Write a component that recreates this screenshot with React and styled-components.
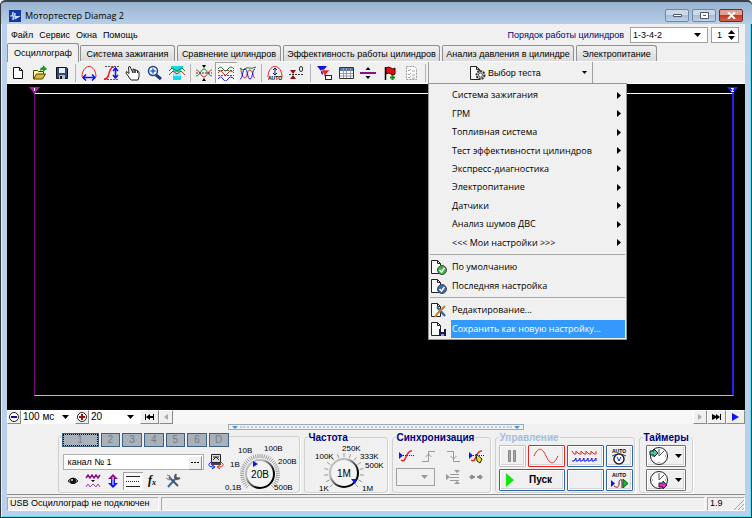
import React from 'react';
import styled, {createGlobalStyle, css} from 'styled-components';

const GlobalStyle = createGlobalStyle`
  * {
    box-sizing: border-box;
  }
  body {
    margin: 0;
    font-family: "Liberation Sans", Arial, sans-serif;
    font-size: 9px;
    line-height: 12px;
    color: #000;
  }
  button, input, select {
    margin: 0;
    padding: 0;
    border: 0;
    border-radius: 0;
    background: none;
    color: inherit;
    font: inherit;
    appearance: none;
    outline: none;
  }
  svg {
    display: block;
    flex: none;
  }
`;

const Window = styled.div`
  display: flex;
  flex-flow: column nowrap;
  min-height: 100vh;
  padding: 0 7px 6px 6px;
  background: #b9d1ea;
  border-left: 1px solid #33373c;
  border-bottom: 1px solid #16323c;
  border-radius: 5px 5px 0 0;
  box-shadow: inset 1px 0 #e4eefa, inset -1px 0 #33373c, inset -2px 0 #62dcf2, inset 0 -1px #5cdcf4;
`;

const TitleBar = styled.header`
  display: flex;
  align-items: center;
  gap: 4px;
  height: 24px;
  margin: 0 -7px 0 -6px;
  padding: 5px 9px 0 8px;
  border-top: 2px solid #3c4148;
  border-radius: 5px 5px 0 0;
  background: linear-gradient(#98b3d1, #b7cee7);
  h1 {
    flex: 1;
    margin: 0;
    font: 9px/14px "Open Sans", sans-serif;
  }
`;

const WindowButton = styled.button`
  display: grid;
  place-items: center;
  width: 24px;
  height: 13px;
  margin-left: -2px;
  border: 1px solid ${props => props.$close ? '#6d2a26' : '#6d87a4'};
  border-radius: 2px;
  background: ${props => props.$close
    ? 'linear-gradient(#e3a08f 45%, #c0392a 50%, #cf6247)'
    : 'linear-gradient(#cadaeb 45%, #a5bdd7 50%, #bdd2e8)'};
  & + & {
    margin-left: -1px;
  }
`;

const Client = styled.main`
  display: flex;
  flex: 1;
  flex-flow: column nowrap;
  background: #f0f0f0;
`;

const MenuBar = styled.nav`
  display: flex;
  align-items: center;
  gap: 6px;
  height: 19px;
  padding: 2px 6px 0 4px;
`;

const OrderLabel = styled.label`
  margin-left: auto;
  color: #000080;
`;

const SelectBox = styled.span`
  display: grid;
  grid-template-columns: minmax(0, 1fr) 13px;
  align-items: center;
  width: ${props => props.$width};
  height: ${props => props.$height || '14px'};
  border: ${props => props.$flat ? '0' : '1px solid #a0a0a0'};
  background: ${props => props.disabled ? '#f0f0f0' : '#fff'};
  font-size: ${props => props.$flat ? '10px' : '9px'};
  select {
    grid-area: 1 / 1 / 2 / 3;
    width: 100%;
    height: 100%;
    padding-left: 2px;
  }
  svg {
    grid-area: 1 / 2;
    pointer-events: none;
  }
`;

const Spinner = styled.span`
  display: flex;
  align-items: center;
  width: 28px;
  height: 16px;
  margin-left: -3px;
  border: 1px solid #a0a0a0;
  background: #fff;
  input {
    width: 16px;
    padding-left: 5px;
  }
`;

const TabBar = styled.div`
  display: flex;
  align-items: flex-end;
  gap: 2px;
  height: 19px;
  box-shadow: inset 0 -1px #fbfbfb;
`;

const Tab = styled.button`
  flex: 0 1 ${props => props.$width};
  height: 16px;
  margin-bottom: 1px;
  border: 1px solid #8e8f8f;
  border-bottom: 0;
  border-radius: 2px 3px 0 0;
  background: linear-gradient(#f1f1f1, #dadada);
  white-space: nowrap;
  &[aria-selected='true'] {
    height: 19px;
    margin: 0 -1px 0 0;
    background: #f0f0f0;
  }
`;

const Toolbar = styled.div`
  display: flex;
  align-items: center;
  height: 22px;
  border-bottom: 1px solid #fff;
`;

const ToolButton = styled.button`
  display: grid;
  place-items: center;
  width: 22px;
  height: 21px;
  ${props => props.$pressed && css`
    background: #fafafa;
    box-shadow: inset 1px 1px #a0a0a0;
  `}
`;

const Divider = styled.span`
  width: 1px;
  height: 18px;
  margin: 0 2px;
  background: #b4b4b4;
`;

const TestPicker = styled.div`
  position: relative;
  width: 165px;
  border-left: 1px solid #a0a0a0;
  border-right: 1px solid #a0a0a0;
`;

const TestButton = styled.button`
  display: flex;
  align-items: center;
  gap: 1px;
  width: 100%;
  height: 21px;
  padding-left: 40px;
  svg:last-child {
    margin: 0 5px 0 auto;
  }
`;

const Popup = styled.div`
  position: absolute;
  z-index: 2;
  top: 21px;
  left: -1px;
  width: 199px;
  padding: 2px 1px 1px;
  border: 1px solid #979797;
  background: #f0f0f0;
  font: 9px/14px "Open Sans", sans-serif;
`;

const PopupGroup = styled.div`
  display: flex;
  flex-flow: column nowrap;
  height: ${props => props.$height};
  & + & {
    margin-top: 6px;
    box-shadow: 0 -3px #f0f0f0, 0 -4px #a8a8a8;
  }
`;

const PopupItem = styled.button`
  display: grid;
  flex: 1;
  grid-template-columns: 21px 1fr 8px;
  align-items: center;
  text-align: left;
  white-space: nowrap;
  span {
    align-self: stretch;
    display: flex;
    align-items: center;
    padding-left: 1px;
    ${props => props.$active && css`
      background: #3399ff;
      color: #fff;
      grid-column: 2 / 4;
    `}
  }
`;

const Scope = styled.section`
  display: flex;
  flex: 1;
  min-height: 200px;
  padding: 9px 11px 14px 27px;
  background: #000;
`;

const Trace = styled.div`
  position: relative;
  flex: 1;
  border: 1px solid;
  border-width: 1px 2px 1px 1px;
  border-color: #fff #2222ee #b8b8b8 #780078;
`;

const Marker = styled.svg`
  position: absolute;
  top: -7px;
  ${props => props.$end ? 'right: -6px' : 'left: -6px'};
`;

const ScrollRow = styled.div`
  display: flex;
  height: 14px;
  background: #f7f7f7;
`;

const SmallButton = styled.button`
  display: grid;
  place-items: center;
  flex: none;
  width: ${props => props.$width};
  height: 14px;
  border: 1px solid;
  border-color: #fff #8a8a8a #8a8a8a #fff;
  background: #f0f0f0;
`;

const Track = styled.div`
  flex: 1;
`;

const Splitter = styled.div`
  display: flex;
  align-items: center;
  justify-content: space-between;
  gap: 2px;
  align-self: center;
  width: 40%;
  height: 6px;
  border: 1px solid #a8a8a8;
  padding: 0 3px;
  &::before, &::after {
    content: '';
    border: 3px solid transparent;
    border-top: 3px solid #3a96e8;
    border-bottom: 0;
  }
  span {
    flex: 1;
    border-top: 2px dotted #a8d2f4;
  }
`;

const Controls = styled.section`
  display: flex;
  justify-content: center;
  gap: 4px;
  padding: 2px 2px 1px 0;
  border-bottom: 1px solid #8c8c8c;
`;

const Group = styled.fieldset`
  width: ${props => props.$width};
  min-width: 0;
  height: 61px;
  margin: 0;
  padding: 2px 3px 0;
  border: 1px solid #d0d0d0;
  border-radius: 3px;
  box-shadow: 1px 1px #fff;
  legend {
    height: 11px;
    padding: 0 1px;
    color: ${props => props.$dim ? '#a5bcda' : '#000080'};
    font: bold 10px/11px "Liberation Sans", sans-serif;
  }
`;

const ChannelGroup = styled(Group)`
  display: flex;
  height: 57px;
  margin-top: 4px;
  padding: 0 0 0 3px;
`;

const ChannelSide = styled.div`
  width: 168px;
`;

const Channels = styled.div`
  display: flex;
  gap: 2px;
  margin-top: -4px;
  background: #f0f0f0;
`;

const ChannelButton = styled.button`
  flex: ${props => props.$active ? '0 0 37px' : '1'};
  height: 14px;
  border: 1px solid #3c5f86;
  background: #a9b1ba;
  color: #777c82;
  font-size: 10px;
  ${props => props.$active && css`
    outline: 1px dotted #000;
    outline-offset: -2px;
  `}
`;

const ChannelName = styled.div`
  display: flex;
  align-items: center;
  margin: 6px 0 2px 1px;
  label {
    display: flex;
    width: 141px;
    height: 16px;
    padding: 1px;
    border: 1px solid #b0b0b0;
    background: #fff;
  }
  input {
    flex: 1;
    min-width: 0;
    padding-left: 3px;
  }
  > svg {
    margin-left: 4px;
  }
`;

const IconRow = styled.div`
  display: flex;
  padding-left: 1px;
`;

const IconButton = styled.button`
  display: grid;
  place-items: center;
  width: 20px;
  height: 18px;
  ${props => props.$pressed && css`
    background: #fafafa;
    box-shadow: inset 1px 1px #a0a0a0;
  `}
`;

const Dial = styled.svg`
  margin-top: ${props => props.$lift};
  font: 8px "Liberation Sans", sans-serif;
  overflow: visible;
`;

const SyncGrid = styled.div`
  display: grid;
  grid-template-columns: repeat(4, 1fr);
  gap: 3px 2px;
  padding: 2px 0;
  button {
    width: 100%;
  }
`;

const SyncSelect = styled(SelectBox)`
  grid-column: span 2;
`;

const RunGrid = styled.div`
  display: grid;
  grid-template-columns: 27px 37px 37px 27px;
  gap: 2px;
`;

const RunButton = styled.button`
  display: flex;
  align-items: center;
  justify-content: center;
  gap: 14px;
  height: 22px;
  border: 1px solid ${props => props.$edge || '#2f67a8'};
  border-radius: 1px;
  background: #f0f0f0;
  box-shadow: inset 0 0 0 1px #fff, inset -2px -2px #d4d4d4;
  ${props => props.$wide && css`
    grid-column: span 2;
    padding-right: 6px;
    font: bold 10px/12px "Liberation Sans", sans-serif;
  `}
`;

const TimerColumn = styled.div`
  display: grid;
  gap: 2px;
  padding: 0 3px;
  button {
    gap: 4px;
  }
`;

const StatusBar = styled.footer`
  display: flex;
  gap: 2px;
  height: 16px;
  padding-top: 2px;
  line-height: 13px;
  white-space: nowrap;
`;

const StatusCell = styled.div`
  display: flex;
  justify-content: space-between;
  align-items: flex-end;
  flex: ${props => props.$width ? `0 0 ${props.$width}` : '1'};
  padding-left: 2px;
  border: 1px solid;
  border-color: #a8a8a8 #fff #fff #a8a8a8;
`;

const Arrow = ({color = '#000'}) => (
  <svg width="7" height="4"><path d="M0 0h7L3.5 4z" fill={color}/></svg>
);

const Art = ({children, w = 18, h = 16}) => (
  <svg width={w} height={h} viewBox={`0 0 ${w} ${h}`} fill="none">{children}</svg>
);

const Page = () => (
  <path d="M1.500 1.500h6l3 3v10h-9zM7.500 1.500v3h3" fill="#fff" stroke="#222"/>
);

const NewIcon = () => (
  <Art><path d="M4.500 2.500h6l3 3v8h-9zM10.500 2.500v3h3" fill="#fff" stroke="#111"/></Art>
);

const OpenIcon = () => (
  <Art>
    <path d="M2.500 14V5.500h4l1 1h5v3" fill="#fff3a0" stroke="#4c4400"/>
    <path d="M2.500 14l3-5h9l-3 5z" fill="#d8b93c" stroke="#4c4400"/>
    <path d="M9 6c0-3 1-4 3-4V0l4 4-4 3V5c-1 0-2 0-3 1z" fill="#18a018"/>
  </Art>
);

const SaveIcon = () => (
  <Art>
    <path d="M3.500 2.500h10l1 1v10h-11z" fill="#34487c" stroke="#111"/>
    <path d="M6 3h6v5H6z" fill="#e8eef6"/>
    <path d="M6 10h6v4H6z" fill="#b0bccc"/>
    <path d="M7 11h2v3H7z" fill="#111"/>
  </Art>
);

const ArchIcon = () => (
  <Art>
    <path d="M2 12C2 6 5 1.500 9 1.500S16 6 16 12" stroke="#f02020"/>
    <path d="M3 12.500h12M6 9.500l-3 3 3 3M12 9.500l3 3-3 3" stroke="#1010ff" strokeWidth="1.500"/>
  </Art>
);

const RiseIcon = () => (
  <Art>
    <path d="M3 1.500h14M2 14.500h14" stroke="#555" strokeDasharray="2 1"/>
    <path d="M2 14c7 1 3-12 10-12" stroke="#f02020" strokeWidth="1.500"/>
    <path d="M13.500 3v10M11 6l2.500-3L16 6M11 10l2.500 3 2.500-3" stroke="#1010ff" strokeWidth="1.500"/>
  </Art>
);

const HandIcon = () => (
  <Art>
    <path d="M5 8.500L2.500 6.500 2 8l5 7h7l1-3V7l-1.500-1V8 5.500L11 5v3-3.500L9 4v4L6 1.500 4.500 2z" fill="#fff" stroke="#222"/>
  </Art>
);

const ZoomIcon = () => (
  <Art>
    <path d="M10 10l5 4" stroke="#223a7c" strokeWidth="3"/>
    <circle cx="7" cy="6" r="4.500" fill="#e8f4ff" stroke="#24407c" strokeWidth="1.500"/>
    <path d="M4.500 6h5M7 3.500v5" stroke="#2060d0" strokeWidth="1.500"/>
  </Art>
);

const GateIcon = () => (
  <Art>
    <path d="M3 1h12v3h-2v11H5V4H3z" fill="#18d8e8"/>
    <path d="M5 7h8v4H5z" fill="#8ff4fa"/>
    <path d="M1 6l3-3 5 3 5-3 3 3" stroke="#108010"/>
    <path d="M1 10l4-4 4 3 4-3 4 4" stroke="#e02020"/>
  </Art>
);

const CrossWaveIcon = () => (
  <Art>
    <path d="M1 11c4 0 5-7 8-7s4 7 8 7" stroke="#108010"/>
    <path d="M1 5c4 0 5 7 8 7s4-7 8-7" stroke="#e02020"/>
    <path d="M1 8h16" stroke="#333" strokeDasharray="2 1"/>
    <path d="M7 0h4L9 3zM7 16h4l-2-3z" fill="#000"/>
  </Art>
);

const ThreeWaveIcon = () => (
  <Art>
    <path d="M1 4q2.500-4 5 0t5 0 6 0" stroke="#108010"/>
    <path d="M1 8q2.500-4 5 0t5 0 6 0" stroke="#e02020"/>
    <path d="M1 14q2.500-4 5 0t5 0 6 0" stroke="#1010ff"/>
    <path d="M1 5.500h16M1 10.500h16" stroke="#555" strokeDasharray="2 1"/>
  </Art>
);

const MixWaveIcon = () => (
  <Art>
    <path d="M1 3q3 3 5 1t4-1 7-1" stroke="#108010"/>
    <path d="M2 4c0 4 2 9 4 9s2-8 5-8 3 8 5 8" stroke="#e02020"/>
    <path d="M1 14c3 0 2-10 5-10s2 10 5 10 2-10 5-10" stroke="#1010ff"/>
  </Art>
);

const AutoArchIcon = () => (
  <Art>
    <path d="M2 12C2 6 5 1.500 9 1.500S16 6 16 12" stroke="#f02020"/>
    <path d="M9 3v7M7 5l2-2 2 2M7 8l2 2 2-2" stroke="#10108a"/>
    <text x="9" y="15" fontSize="5" fontWeight="bold" textAnchor="middle" fill="#000">AUTO</text>
  </Art>
);

const ZeroIcon = () => (
  <Art>
    <path d="M1 9.500h15" stroke="#333" strokeDasharray="2 1"/>
    <path d="M2 5h6L5 9zM2 14h6l-3-4z" fill="#8c1010"/>
    <rect x="11.500" y="1.500" width="3" height="5" rx="1.500" stroke="#333"/>
  </Art>
);

const FilterIcon = () => (
  <Art>
    <path d="M2 1h10L8 6v4L6 8V6z" fill="#1010e0"/>
    <path d="M6 5h9l-4 4v4l-2-2V9z" fill="#f02020" stroke="#fff" strokeWidth=".5"/>
    <rect x="10.500" y="10.500" width="6" height="4" fill="#fff" stroke="#1010c0"/>
  </Art>
);

const TableIcon = () => (
  <Art>
    <path d="M2.500 2.500h14v11h-14z" fill="#fff" stroke="#333"/>
    <path d="M3 3h13v3H3z" fill="#5078a8"/>
    <path d="M6.500 3v10M9.500 3v10M13.500 3v10M3 8.500h13M3 11h13" stroke="#99a"/>
  </Art>
);

const SplitIcon = () => (
  <Art>
    <path d="M1 8h16" stroke="#8a108a" strokeWidth="2"/>
    <path d="M6.500 5h5L9 2zM6.500 11h5L9 14z" fill="#000"/>
  </Art>
);

const FlagIcon = () => (
  <Art>
    <path d="M4.500 2v13" stroke="#000" strokeWidth="1.500"/>
    <path d="M5 3q3-2 5 0t4 0v6q-2 2-4 0T5 9z" fill="#e01010" stroke="#400"/>
    <path d="M11.500 10v5M9 12.500h5" stroke="#109010" strokeWidth="2"/>
  </Art>
);

const CheckListIcon = () => (
  <Art>
    <path d="M3.500 1.500h8l2 2v11h-10z" fill="#fafafa" stroke="#999" strokeDasharray="2 1"/>
    <path d="M5 5l1 1 2-2M5 9l1 1 2-2M5 12l1 1 2-2M9 6h3M9 10h3M9 13h3" stroke="#aaa"/>
  </Art>
);

const TestIcon = () => (
  <Art>
    <Page/>
    <circle cx="11.500" cy="10" r="4" fill="#cfd8cf" stroke="#333" strokeWidth="2" strokeDasharray="2 1"/>
    <circle cx="11.500" cy="10" r="2" fill="#fff" stroke="#555"/>
  </Art>
);

const BadgeIcon = ({fill}) => (
  <Art>
    <Page/>
    <circle cx="12" cy="11" r="4.500" fill={fill} stroke="#445"/>
    <path d="M9.500 11l2 2 3-4" stroke="#fff" strokeWidth="1.500"/>
  </Art>
);

const EditIcon = () => (
  <Art>
    <Page/>
    <path d="M7 5l8 9" stroke="#3c6ca8" strokeWidth="2.500"/>
    <path d="M15 4l-8 8-2 3" stroke="#c88018" strokeWidth="2"/>
  </Art>
);

const PageSaveIcon = () => (
  <Art>
    <Page/>
    <path d="M9 8h7v7H9z" fill="#181850"/>
    <path d="M11 8h3v3h-3z" fill="#fff"/>
    <path d="M11 13h3v2h-3z" fill="#9aa"/>
  </Art>
);

const MonitorIcon = () => (
  <Art w={16} h={17}>
    <path d="M3.500 1.500h9v8h-9z" fill="#ddd" stroke="#222"/>
    <path d="M5 7l3-3 3 3M5 4h6" stroke="#222"/>
    <path d="M3 10h10v2H3z" fill="#444"/>
    <path d="M3 9c-4 3-2 5 3 5M4 12l3 2-3 2" stroke="#1010ff"/>
    <path d="M13 9c4 3 2 5-3 5M12 12l-3 2 3 2" stroke="#f02020"/>
  </Art>
);

const EyeIcon = () => (
  <Art>
    <path d="M4 8q5-6 10 0-5 5-10 0z" fill="#999" stroke="#222"/>
    <circle cx="9" cy="8" r="3" fill="#111"/>
    <circle cx="8" cy="7" r="1" fill="#ddd"/>
  </Art>
);

const ZigzagIcon = () => (
  <Art>
    <path d="M2 5l2-3 2 3 2-3 2 3 2-3 2 3 2-3" stroke="#8a108a" strokeWidth="1.500"/>
    <path d="M2 14l2-3 2 3 3-3 3 3 2-3 2 3" stroke="#a040a0"/>
    <path d="M7 7h4L9 9z" fill="#000"/>
  </Art>
);

const UpDownIcon = () => (
  <Art>
    <path d="M9 1l5 5h-3v3H7V6H4z" fill="#8a108a"/>
    <path d="M9 15l5-5h-3V7H7v3H4z" fill="#1010ff"/>
    <path d="M9 4v8" stroke="#fff"/>
  </Art>
);

const DashIcon = () => (
  <Art>
    <path d="M2 3.500h14M2 13.500h14" stroke="#222"/>
    <path d="M2 8.500h14" stroke="#222" strokeDasharray="1 1"/>
  </Art>
);

const FxIcon = () => (
  <Art>
    <text x="4" y="11" fontFamily="Liberation Serif" fontStyle="italic" fontWeight="bold" fontSize="12" fill="#000">f</text>
    <text x="8" y="12" fontFamily="Liberation Serif" fontStyle="italic" fontWeight="bold" fontSize="8" fill="#000">x</text>
  </Art>
);

const ToolsIcon = () => (
  <Art>
    <path d="M4 14l9-10" stroke="#2f6cb4" strokeWidth="2"/>
    <path d="M12 1l-1 3 2 2 3-1M5 4l9 9" stroke="#555" strokeWidth="2"/>
    <path d="M3 2l3 1 1 3-2 1-3-2" stroke="#777"/>
  </Art>
);

const SyncIcon = ({pen}) => (
  <Art w={16}>
    <path d="M1 7.500h15" stroke="#1010ff" strokeDasharray="1 1"/>
    <path d="M3 12c6 4 4-10 11-9" stroke="#f02020" strokeWidth="1.500"/>
    <path d="M1 4l4 3.500L1 11z" fill="#1010ff"/>
    {pen && <path d="M8 6l6 5-2 4-3-2z" fill="#f0e020" stroke="#222"/>}
  </Art>
);

const EdgeUpIcon = () => (
  <Art w={16}><path d="M1 13.500h6.500V3.500H14M4.500 9l3-3 3 3" stroke="#999"/></Art>
);

const EdgeDownIcon = () => (
  <Art w={16}><path d="M2 3.500h6.500v10H15M5.500 8l3 3 3-3" stroke="#999"/></Art>
);

const LevelIcon = () => (
  <Art w={16}>
    <path d="M5 5.500h9M5 8.500h9M5 11.500h9" stroke="#999"/>
    <path d="M1 5l4 3-4 3zM9 1h6l-3 3zM9 15h6l-3-3z" fill="#999"/>
  </Art>
);

const MeetIcon = () => (
  <Art w={16}><path d="M1 8h5M10 8h5M3 6l4 2-4 2zM13 6L9 8l4 2z" fill="#888" stroke="#888"/></Art>
);

const AutoKnobIcon = () => (
  <Art w={22} h={19}>
    <text x="11" y="6" fontSize="5" fontWeight="bold" textAnchor="middle" fill="#000">AUTO</text>
    <path d="M4 9q7-4 14 0" stroke="#1050e0"/>
    <circle cx="11" cy="12" r="5" fill="#fff" stroke="#222" strokeWidth="1.500"/>
    <path d="M9 10l2 4 2-4" stroke="#1010ff"/>
  </Art>
);

const AutoRunIcon = () => (
  <Art w={22} h={19}>
    <text x="11" y="6" fontSize="5" fontWeight="bold" textAnchor="middle" fill="#000">AUTO</text>
    <path d="M6 15c4 3 5 0 5-2s0-5 3-4v8" stroke="#8a1010"/>
    <path d="M3 9l4 3.500L3 16z" fill="#1010ff"/>
    <path d="M15 8l5 4.500-5 4.500z" fill="#10c010" stroke="#063"/>
  </Art>
);

const ClockIcon = ({out}) => (
  <Art w={22} h={20}>
    <circle cx="10" cy="10" r="8.500" fill="#fff" stroke="#222"/>
    <path d="M10 3v7l5-5M10 17v-1M3 10h1M17 10h-1" stroke="#555"/>
    {out
      ? <path d="M10 13h4v-2l4 4-4 4v-2h-4z" fill="#f020d0" stroke="#222"/>
      : <path d="M1 5h4V3l4 4-4 4V9H1z" fill="#40c8b0" stroke="#222"/>}
  </Art>
);

const PlayIcon = () => (
  <Art w={10} h={16}><path d="M1 1l8 7-8 7z" fill="#10e810"/></Art>
);

const ticks = (cx, cy, count) => {
  const lines = [];
  for (let i = 0; i <= count; i++) {
    const a = (135 + i * 270 / count) * Math.PI / 180;
    lines.push(`M${cx + 16 * Math.cos(a)} ${cy + 16 * Math.sin(a)}L${cx + 20 * Math.cos(a)} ${cy + 20 * Math.sin(a)}`);
  }
  return lines.join('');
};

const Knob = ({width, cx, cy, count, value, labels, pointer, lift}) => (
  <Dial width={width} height="52" $lift={lift}>
    <defs>
      <linearGradient id="rim" x1="0" y1="0" x2="1" y2="1">
        <stop offset="0.3" stopColor="#bbb"/>
        <stop offset="0.7" stopColor="#000"/>
      </linearGradient>
    </defs>
    <path d={ticks(cx, cy, count)} stroke="#999"/>
    <circle cx={cx} cy={cy} r="14" fill="#f3f3f3" stroke="url(#rim)" strokeWidth="2"/>
    <path d={pointer} fill="#1010ff"/>
    <text x={cx} y={cy + 4} fontSize="10" textAnchor="middle">{value}</text>
    {labels.map(([text, x, y]) => <text key={text} x={x} y={y}>{text}</text>)}
  </Dial>
);

const tabs = [
  ['Осциллограф', '72px'],
  ['Система зажигания', '95px'],
  ['Сравнение цилиндров', '104px'],
  ['Эффективность работы цилиндров', '157px'],
  ['Анализ давления в цилиндре', '132px'],
  ['Электропитание', '81px'],
];

const tools = [
  [['Новый', NewIcon], ['Открыть', OpenIcon], ['Сохранить', SaveIcon]],
  [['Период', ArchIcon], ['Амплитуда', RiseIcon], ['Рука', HandIcon], ['Лупа', ZoomIcon], ['Окно', GateIcon]],
  [['Совместить', CrossWaveIcon], ['Разделить', ThreeWaveIcon, true], ['Смешать', MixWaveIcon]],
  [['Авто', AutoArchIcon], ['Ноль', ZeroIcon]],
  [['Фильтр', FilterIcon], ['Таблица', TableIcon], ['Линейка', SplitIcon], ['Метка', FlagIcon], ['Список', CheckListIcon]],
];

const testMenu = [
  'Система зажигания',
  'ГРМ',
  'Топливная система',
  'Тест эффективности цилиндров',
  'Экспресс-диагностика',
  'Электропитание',
  'Датчики',
  'Анализ шумов ДВС',
  '<<< Мои настройки >>>',
];

const channelTools = [
  ['Показать', EyeIcon],
  ['Сглаживание', ZigzagIcon],
  ['Инверсия', UpDownIcon],
  ['Линии', DashIcon, true],
  ['Функция', FxIcon],
  ['Настройка', ToolsIcon],
];

const voltLabels = [
  ['0,1В', -4, 51], ['1В', 1, 28], ['10В', 9, 14], ['100В', 35, 12], ['200В', 49, 25], ['500В', 45, 51],
];

const rateLabels = [
  ['1K', 11, 47], ['100K', 7, 15], ['250K', 34, 7], ['333K', 52, 15], ['500K', 57, 24], ['1M', 54, 47],
];

const TestMenu = () => (
  <Popup role='menu'>
    <PopupGroup $height='166px'>
      {testMenu.map(name => (
        <PopupItem key={name} role='menuitem'>
          <i/>
          <span>{name}</span>
          <svg width="4" height="7"><path d="M0 0l4 3.500L0 7z"/></svg>
        </PopupItem>
      ))}
    </PopupGroup>
    <PopupGroup $height='37px'>
      <PopupItem role='menuitem'><BadgeIcon fill='#38b838'/><span>По умолчанию</span></PopupItem>
      <PopupItem role='menuitem'><BadgeIcon fill='#3c68b0'/><span>Последняя настройка</span></PopupItem>
    </PopupGroup>
    <PopupGroup $height='37px'>
      <PopupItem role='menuitem'><EditIcon/><span>Редактирование...</span></PopupItem>
      <PopupItem role='menuitem' $active><PageSaveIcon/><span>Сохранить как новую настройку...</span></PopupItem>
    </PopupGroup>
  </Popup>
);

const ChannelPanel = () => (
  <ChannelGroup $width='242px' aria-label='Канал'>
    <ChannelSide>
      <Channels>
        {['1', '2', '3', '4', '5', '6', 'D'].map(name => (
          <ChannelButton key={name} $active={name === '1'}>{name}</ChannelButton>
        ))}
      </Channels>
      <ChannelName>
        <label>
          <input aria-label='Имя канала' defaultValue='канал № 1'/>
          <SmallButton $width='14px' aria-label='Выбрать'>
            <svg width="8" height="2"><path d="M0 0h2v1H0zM3 0h2v1H3zM6 0h2v1H6z"/></svg>
          </SmallButton>
        </label>
        <MonitorIcon/>
      </ChannelName>
      <IconRow>
        {channelTools.map(([name, Icon, pressed]) => (
          <IconButton key={name} aria-label={name} $pressed={pressed}><Icon/></IconButton>
        ))}
      </IconRow>
    </ChannelSide>
    <Knob width={70} cx={31} cy={35} count={40} value='20В' labels={voltLabels} pointer='M24 22l5 3-5 3z' lift='2px'/>
  </ChannelGroup>
);

const SyncPanel = () => (
  <Group $width='99px'>
    <legend>Синхронизация</legend>
    <SyncGrid>
      <IconButton aria-label='Синхронизация'><SyncIcon/></IconButton>
      <IconButton aria-label='Фронт'><EdgeUpIcon/></IconButton>
      <IconButton aria-label='Спад'><EdgeDownIcon/></IconButton>
      <IconButton aria-label='Уровень вручную'><SyncIcon pen/></IconButton>
      <SyncSelect $width='39px' $height='18px' disabled>
        <select aria-label='Источник' disabled/>
        <Arrow color='#999'/>
      </SyncSelect>
      <IconButton aria-label='Уровень'><LevelIcon/></IconButton>
      <IconButton aria-label='Центр'><MeetIcon/></IconButton>
    </SyncGrid>
  </Group>
);

const RunPanel = () => (
  <Group $width='140px' $dim>
    <legend>Управление</legend>
    <RunGrid>
      <RunButton $edge='#c0c0c0' aria-label='Пауза'>
        <Art w={10} h={14}><path d="M1.500 1.500h2v11h-2zM6.500 1.500h2v11h-2z" fill="#aaa" stroke="#888"/></Art>
      </RunButton>
      <RunButton $edge='#f02020' aria-label='Осциллограмма'>
        <Art w={26} h={16}><path d="M1 8C5-1 9-1 13 8s8 9 12 0" stroke="#e03030"/></Art>
      </RunButton>
      <RunButton aria-label='Самописец'>
        <Art w={30} h={16}>
          <path d="M2 3l2 3h2V3l3 3h2V3l3 3h2V3l3 3h2V3l3 3h2V3" stroke="#f02020"/>
          <path d="M2 13h2l2-3v3h2l2-3v3h2l2-3v3h2l2-3v3h2l2-3v3h2l2-3v3" stroke="#1010ff"/>
        </Art>
      </RunButton>
      <RunButton aria-label='Авто усиление'><AutoKnobIcon/></RunButton>
      <RunButton $wide><PlayIcon/>Пуск</RunButton>
      <RunButton aria-label='Запись'/>
      <RunButton aria-label='Авто пуск'><AutoRunIcon/></RunButton>
    </RunGrid>
  </Group>
);

const App = () => {
  return (
    <Window>
      <GlobalStyle/>
      <TitleBar>
        <Art w={12} h={12}>
          <path d="M0 0h12v12H0z" fill="#1838a0"/>
          <path d="M1 6h2l1-4v8l2-7v6l5-3" stroke="#c8e0ff" fill="#c8e0ff"/>
        </Art>
        <h1>Мотортестер Diamag 2</h1>
        <WindowButton aria-label='Свернуть'>
          <Art w={9} h={5}><path d="M.5 1.500h8v2h-8z" fill="#fff" stroke="#556"/></Art>
        </WindowButton>
        <WindowButton aria-label='Развернуть'>
          <Art w={9} h={7}><path d="M.5.5h8v6h-8z" fill="#fff" stroke="#556"/><path d="M3 3h3v1H3z" fill="#556"/></Art>
        </WindowButton>
        <WindowButton $close aria-label='Закрыть'>
          <Art w={9} h={7}><path d="M1 0l7 7M8 0L1 7" stroke="#fff" strokeWidth="2"/></Art>
        </WindowButton>
      </TitleBar>
      <Client>
        <MenuBar>
          {['Файл', 'Сервис', 'Окна', 'Помощь'].map(name => <button key={name}>{name}</button>)}
          <OrderLabel htmlFor='order'>Порядок работы цилиндров</OrderLabel>
          <SelectBox $width='78px' $height='16px'>
            <select id='order'><option>1-3-4-2</option></select>
            <Arrow/>
          </SelectBox>
          <Spinner>
            <input aria-label='Цилиндр' defaultValue='1'/>
            <svg width="7" height="10"><path d="M0 4h7L3.500 0zM0 6h7l-3.500 4z"/></svg>
          </Spinner>
        </MenuBar>
        <TabBar role='tablist'>
          {tabs.map(([name, width], i) => (
            <Tab key={name} role='tab' aria-selected={i === 0} $width={width}>{name}</Tab>
          ))}
        </TabBar>
        <Toolbar>
          {tools.map((group, i) => (
            <React.Fragment key={i}>
              {group.map(([name, Icon, pressed]) => (
                <ToolButton key={name} aria-label={name} $pressed={pressed}><Icon/></ToolButton>
              ))}
              <Divider/>
            </React.Fragment>
          ))}
          <TestPicker>
            <TestButton><TestIcon/>Выбор теста<svg width="5" height="3"><path d="M0 0h5L2.500 3z"/></svg></TestButton>
            <TestMenu/>
          </TestPicker>
        </Toolbar>
        <Scope>
          <Trace>
            <Marker width="11" height="7">
              <path d="M0 0h11L5.500 7z" fill="#a020a0"/>
              <path d="M5.500 1v3" stroke="#fff"/>
            </Marker>
            <Marker width="11" height="7" $end>
              <path d="M0 0h11L5.500 7z" fill="#2020ff"/>
              <path d="M4 1.500h2.500L4.500 4.500H7" stroke="#fff" fill="none"/>
            </Marker>
          </Trace>
        </Scope>
        <ScrollRow>
          <SmallButton $width='14px' aria-label='Уменьшить'>
            <Art w={12} h={12}><circle cx="6" cy="6" r="4.500" fill="#fff" stroke="#222"/><path d="M3 6h6" stroke="#10108a" strokeWidth="2"/></Art>
          </SmallButton>
          <SelectBox $width='54px' $flat>
            <select aria-label='Развёртка'><option>100 мс</option></select>
            <Arrow/>
          </SelectBox>
          <SmallButton $width='14px' aria-label='Увеличить'>
            <Art w={12} h={12}><circle cx="6" cy="6" r="4.500" fill="#fff" stroke="#222"/><path d="M3 6h6M6 3v6" stroke="#a01010" strokeWidth="2"/></Art>
          </SmallButton>
          <SelectBox $width='51px' $flat>
            <select aria-label='Масштаб'><option>20</option></select>
            <Arrow/>
          </SelectBox>
          <SmallButton $width='19px' aria-label='В начало'>
            <svg width="9" height="6"><path d="M0 0h1v6H0zM8 0h1v6H8zM1 3l4-3v2h3v2H5v2z"/></svg>
          </SmallButton>
          <SmallButton $width='14px' aria-label='Назад'>
            <svg width="4" height="6"><path d="M4 0v6L0 3z" fill="#aaa"/></svg>
          </SmallButton>
          <Track/>
          <SmallButton $width='14px' aria-label='Вперёд'>
            <svg width="4" height="6"><path d="M0 0v6l4-3z" fill="#aaa"/></svg>
          </SmallButton>
          <SmallButton $width='19px' aria-label='В конец'>
            <svg width="9" height="6"><path d="M0 0l4 2V0l4 3-4 3V4L0 6zM8 0h1v6H8z"/></svg>
          </SmallButton>
          <SmallButton $width='19px' aria-label='Воспроизвести'>
            <svg width="7" height="8"><path d="M0 0v8l7-4z" fill="#1010ff"/></svg>
          </SmallButton>
        </ScrollRow>
        <Splitter><span/></Splitter>
        <Controls>
          <ChannelPanel/>
          <Group $width='84px'>
            <legend>Частота</legend>
            <Knob width={76} cx={36} cy={29} count={14} value='1M' labels={rateLabels} pointer='M43 35h6l-2 5z' lift='-1px'/>
          </Group>
          <SyncPanel/>
          <RunPanel/>
          <Group $width='54px'>
            <legend>Таймеры</legend>
            <TimerColumn>
              <RunButton $edge='#707070' aria-label='Таймер пуска'><ClockIcon/><Arrow/></RunButton>
              <RunButton $edge='#707070' aria-label='Таймер остановки'><ClockIcon out/><Arrow/></RunButton>
            </TimerColumn>
          </Group>
        </Controls>
        <StatusBar>
          <StatusCell $width='152px'>USB Осциллограф не подключен</StatusCell>
          <StatusCell/>
          <StatusCell $width='38px'>
            1.9
            <Art w={10} h={10}><path d="M0 10L10 0M4 10l6-6M8 10l2-2" stroke="#a0a0a0"/></Art>
          </StatusCell>
        </StatusBar>
      </Client>
    </Window>
  );
};

export default App;
